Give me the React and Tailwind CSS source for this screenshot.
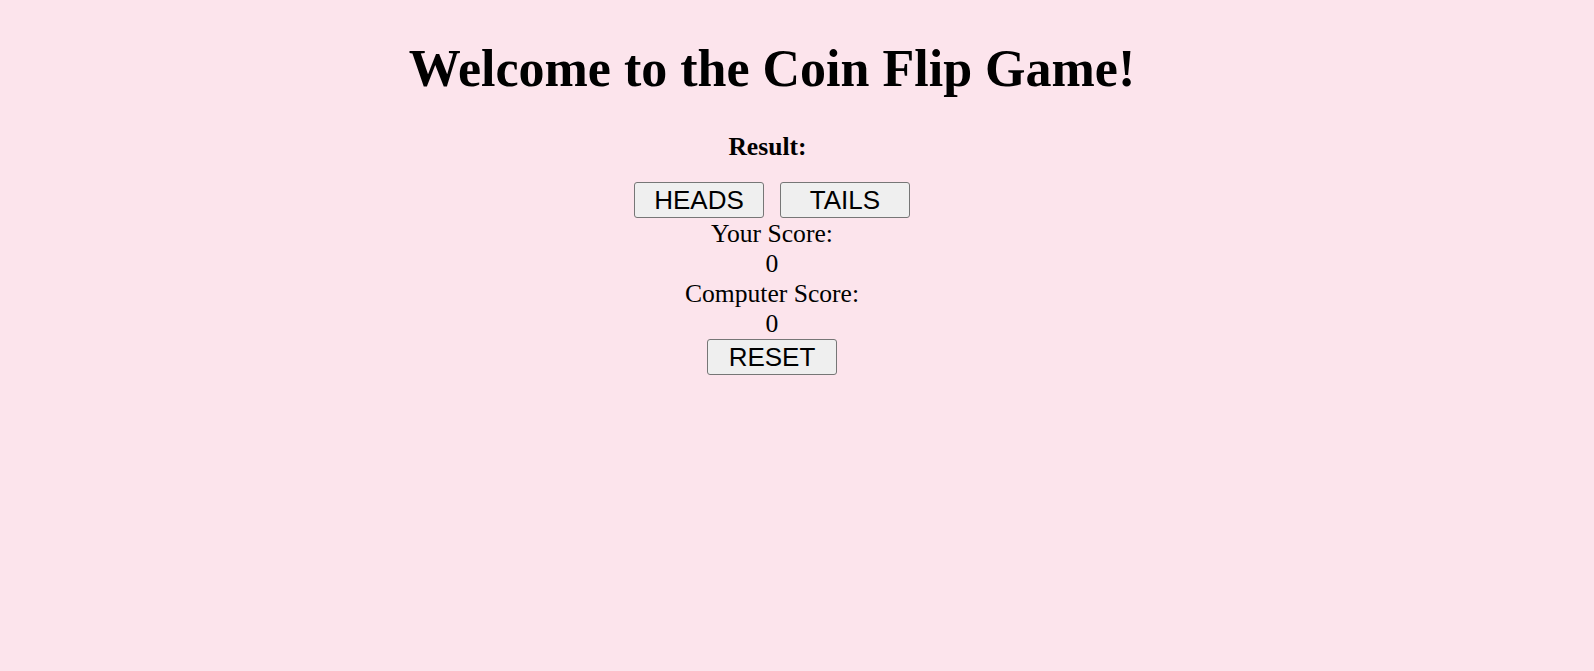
import React, { useState } from "react";

function App() {
  const [result, setResult] = useState("");
  const [score, setScore] = useState({ you: 0, computer: 0 });

  const flip = (guess) => {
    const side = Math.random() < 0.5 ? "HEADS" : "TAILS";
    setResult(side);
    setScore((prev) =>
      side === guess
        ? { ...prev, you: prev.you + 1 }
        : { ...prev, computer: prev.computer + 1 }
    );
  };

  const reset = () => {
    setResult("");
    setScore({ you: 0, computer: 0 });
  };

  const btn =
    "w-[130px] h-[36px] bg-[#efefef] border border-[#767676] rounded-[3px] text-[26px] leading-none text-black font-['Liberation_Sans',Arial,sans-serif] hover:bg-[#e5e5e5]";

  return (
    <section className="min-h-screen bg-[#fce4ec] pt-[40px] pr-[50px] text-center text-black font-['Liberation_Serif','Times_New_Roman',serif]">
      <h1 className="text-[52px] leading-[57px] font-bold">
        Welcome to the Coin Flip Game!
      </h1>

      <p className="mt-[36px] pr-[9px] text-[25.6px] leading-[28.3px] font-bold">
        Result: {result}
      </p>

      <div className="mt-[21px] flex justify-center gap-[16px]">
        <button type="button" onClick={() => flip("HEADS")} className={btn}>
          HEADS
        </button>
        <button type="button" onClick={() => flip("TAILS")} className={btn}>
          TAILS
        </button>
      </div>

      <div className="mt-[1px] text-[25.6px] leading-[30px]">
        <div>Your Score:</div>
        <div>{score.you}</div>
        <div>Computer Score:</div>
        <div>{score.computer}</div>
      </div>

      <div className="flex justify-center">
        <button type="button" onClick={reset} className={btn}>
          RESET
        </button>
      </div>
    </section>
  );
}

export default App;
